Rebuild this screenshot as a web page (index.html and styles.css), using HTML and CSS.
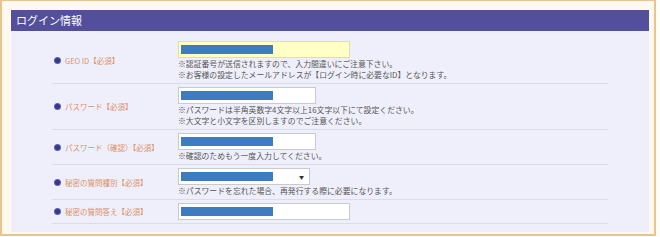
FILE: index.html
```html
<!DOCTYPE html>
<html>
<head>
  <meta charset="utf-8">
  <title>ログイン情報</title>
  <link rel="stylesheet" href="styles.css">
</head>
<body>
<div class="frame">
    <div class="panel">
        <div class="panel-header">ログイン情報</div>
        <div class="panel-body">
            <div class="form-row">
                <div class="label"><span class="dot"></span>GEO ID【必須】</div>
                <div class="value">
                    <div class="field field-yellow wide"><span class="mask"></span></div>
                    <div class="note">※認証番号が送信されますので、入力間違いにご注意下さい。</div>
                    <div class="note">※お客様の設定したメールアドレスが【ログイン時に必要なID】となります。</div>
                </div>
            </div>
            <div class="form-row">
                <div class="label"><span class="dot"></span>パスワード【必須】</div>
                <div class="value">
                    <div class="field mid"><span class="mask"></span></div>
                    <div class="note">※パスワードは半角英数字4文字以上16文字以下にて設定ください。</div>
                    <div class="note">※大文字と小文字を区別しますのでご注意ください。</div>
                </div>
            </div>
            <div class="form-row">
                <div class="label"><span class="dot"></span>パスワード（確認）【必須】</div>
                <div class="value">
                    <div class="field mid"><span class="mask"></span></div>
                    <div class="note">※確認のためもう一度入力してください。</div>
                </div>
            </div>
            <div class="form-row">
                <div class="label"><span class="dot"></span>秘密の質問種別【必須】</div>
                <div class="value">
                    <div class="field select"><span class="mask"></span><span class="arrow">▼</span></div>
                    <div class="note">※パスワードを忘れた場合、再発行する際に必要になります。</div>
                </div>
            </div>
            <div class="form-row">
                <div class="label"><span class="dot"></span>秘密の質問答え【必須】</div>
                <div class="value">
                    <div class="field wide"><span class="mask"></span></div>
                </div>
            </div>
        </div>
    </div>
</div>
</body>
</html>
```

FILE: styles.css
```css
html, body {
    margin: 0;
    background: #fffdf8;
}
body {
    font-family: "Noto Sans CJK JP", "DejaVu Sans", sans-serif;
}
.frame {
    width: 656px;
    height: 236px;
    box-sizing: border-box;
    border: 2px solid #e9c48e;
    border-top-width: 1px;
    background: #fdf9ef;
    padding: 9px 5px 2px 9px;
}
.panel {
    height: 100%;
    display: flex;
    flex-direction: column;
    background: #efeffb;
}
.panel-header {
    height: 21px;
    line-height: 21px;
    padding-left: 5px;
    background: #534f9d;
    color: white;
    font-size: 11px;
}
.panel-body {
    padding: 7px 41px 0;
}
.form-row {
    display: grid;
    grid-template-columns: 126px 1fr;
    align-items: center;
    border-bottom: 1px solid #dcdce8;
    padding: 3px 0 3px;
}
.label {
    display: flex;
    align-items: center;
    gap: 4px;
    padding-left: 2px;
    font-size: 7.5px;
    color: #dc9068;
}
.dot {
    width: 7px;
    height: 7px;
    border-radius: 50%;
    background: radial-gradient(circle, #38388c 40%, #7c7cc0 80%, #c8c8e8 100%);
}
.field {
    display: flex;
    align-items: center;
    justify-content: space-between;
    height: 17px;
    box-sizing: border-box;
    border: 1px solid #cacaca;
    background: white;
    padding: 0 5px 0 2px;
}
.field-yellow {
    background: #ffffc6;
    border-color: #dedeb0;
}
.wide {
    width: 172px;
}
.mid {
    width: 138px;
}
.select {
    width: 132px;
}
.mask {
    width: 92px;
    height: 9px;
    background: #3e7bc0;
}
.arrow {
    font-size: 5px;
    color: #333;
}
.note {
    font-size: 7.85px;
    line-height: 11px;
    color: #555;
    white-space: nowrap;
}
```
